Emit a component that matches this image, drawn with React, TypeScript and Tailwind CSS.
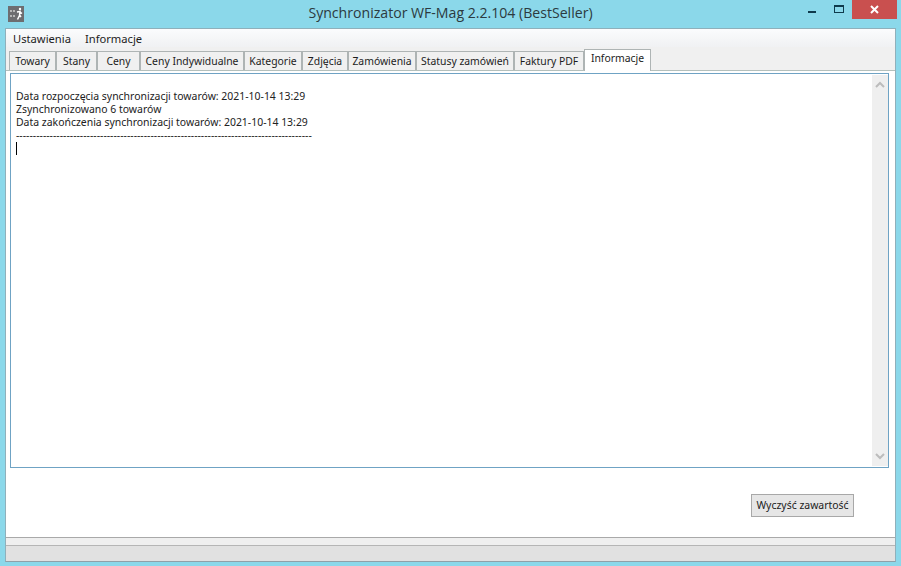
import React from "react";

const tabs: [string, string][] = [
  ["Towary", "w-[47px]"],
  ["Stany", "w-[41px]"],
  ["Ceny", "w-[43px]"],
  ["Ceny Indywidualne", "w-[104px]"],
  ["Kategorie", "w-[58px]"],
  ["Zdjęcia", "w-[46px]"],
  ["Zamówienia", "w-[68px]"],
  ["Statusy zamówień", "w-[98px]"],
  ["Faktury PDF", "w-[70px]"],
];

export default function App() {
  return (
    <div className="w-[901px] h-[566px] bg-[#8bd8ea] flex flex-col overflow-hidden font-['Noto_Sans',sans-serif] text-[11px] text-[#1c1c1c]">
      <div className="h-[28px] flex items-start relative shrink-0">
        <svg className="absolute left-[8px] top-[6px]" width="16" height="16" viewBox="0 0 16 16">
          <rect width="16" height="16" fill="#6d6d70" />
          <circle cx="3" cy="5" r="1.1" fill="#c9c9c9" />
          <circle cx="6" cy="5" r="1.1" fill="#c9c9c9" />
          <circle cx="3" cy="10" r="1.1" fill="#c9c9c9" />
          <circle cx="6" cy="10" r="1.1" fill="#c9c9c9" />
          <circle cx="12" cy="3" r="1.2" fill="#fff" />
          <path d="M9 6l3-.5-.5 4-2 4M11.5 9l1.5 2M12 6l2 1.5" stroke="#fff" strokeWidth="1.5" fill="none" />
        </svg>
        <div className="w-full text-center text-[14.1px] leading-[26px] text-[#2c3a40] font-['Open_Sans',sans-serif]">
          Synchronizator WF-Mag 2.2.104 (BestSeller)
        </div>
        <svg className="absolute left-[808px] top-[11px]" width="8" height="2"><rect width="8" height="2" fill="#0f3a4c" /></svg>
        <div className="absolute left-[834px] top-[5px] w-[10px] h-[8px] border border-[#0f3a4c] border-t-[2px]" />
        <div className="absolute left-[852px] top-0 w-[45px] h-[19px] bg-[#c9504f] flex items-center justify-center">
          <svg width="9" height="9" viewBox="0 0 9 9"><path d="M1 1l7 7M8 1l-7 7" stroke="#fff" strokeWidth="2" /></svg>
        </div>
      </div>

      <div className="mx-[5px] w-[891px] h-[534px] border border-[#8fb0bb] border-b-[#8fa0a8] flex flex-col shrink-0">
        <div className="h-[18px] bg-gradient-to-b from-[#fbfcfd] to-[#f0f1f3] flex items-center gap-[14px] pl-[7px] pt-[3px] text-[11.2px] shrink-0">
          <span>Ustawienia</span>
          <span>Informacje</span>
        </div>
        <div className="h-[23px] bg-[#f0f0f0] flex items-end pl-[3px] shrink-0">
          {tabs.map(([t, w]) => (
            <div
              key={t}
              className={`${w} h-[20px] -mb-px bg-[#f0f0f0] border border-[#aeb4b4] border-b-0 flex items-center justify-center text-[10.4px] shrink-0`}
            >
              {t}
            </div>
          ))}
          <div className="w-[67px] h-[22px] -mb-px pt-[1px] bg-white border border-[#aeb4b4] border-b-0 flex items-start justify-center text-[10.4px] shrink-0 relative z-10">
            Informacje
          </div>
        </div>
        <div className="flex-1 bg-white border-t border-[#b4c0bc] pt-[2px] pl-[4px] pr-[3px] flex flex-col min-h-0">
          <div className="h-[395px] w-[879px] border border-[#6fa3c4] flex shrink-0">
            <div className="flex-1 pl-[5px] pt-[16px] text-[10.45px] leading-[13px] text-[#222]">
              <div>Data rozpoczęcia synchronizacji towarów: 2021-10-14 13:29</div>
              <div>Zsynchronizowano 6 towarów</div>
              <div>Data zakończenia synchronizacji towarów: 2021-10-14 13:29</div>
              <div className="whitespace-nowrap">{"-".repeat(88)}</div>
              <div className="w-px h-[13px] bg-black" />
            </div>
            <div className="w-[16px] bg-[#efefef] flex flex-col justify-between items-center py-[6px] my-[1px]">
              <svg width="10" height="7" viewBox="0 0 10 7"><path d="M1 6l4-4 4 4" stroke="#bcbcbc" strokeWidth="2" fill="none" /></svg>
              <svg width="10" height="7" viewBox="0 0 10 7"><path d="M1 1l4 4 4-4" stroke="#bcbcbc" strokeWidth="2" fill="none" /></svg>
            </div>
          </div>
          <div className="flex justify-end pr-[38px] pt-[26px]">
            <button className="w-[103px] h-[23px] bg-[#e6e6e6] border border-[#a8a8a8] text-[10.45px] text-[#1c1c1c]">
              Wyczyść zawartość
            </button>
          </div>
        </div>
        <div className="h-[8px] bg-[#efefef] border-t border-[#a9a9a9] shrink-0" />
        <div className="h-[16px] bg-[#e1e1e1] border-t border-[#b5b5b5] shrink-0" />
      </div>
    </div>
  );
}
